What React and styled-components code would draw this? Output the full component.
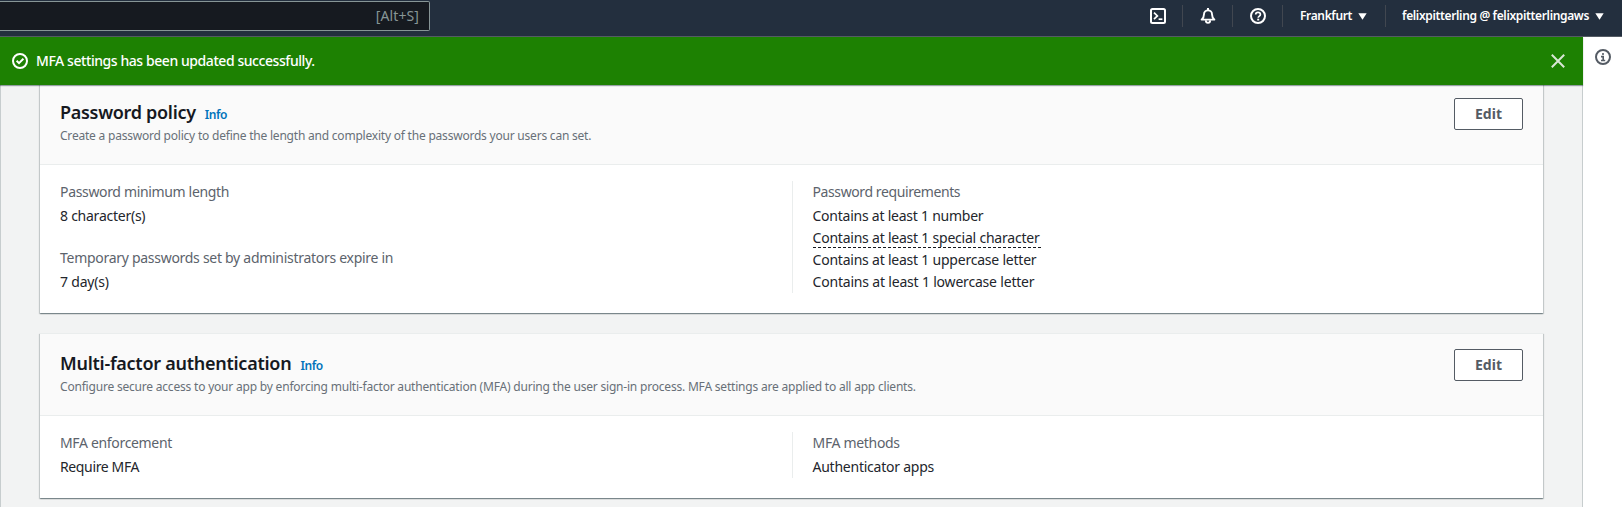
import React from "react";
import styled, { createGlobalStyle } from "styled-components";

const GlobalStyle = createGlobalStyle`
  *, *::before, *::after { box-sizing: border-box; }
  body {
    margin: 0;
    overflow: hidden;
    font-family: "Noto Sans", "Open Sans", sans-serif;
    font-size: 14px;
    line-height: 22px;
    color: #16191f;
    background: #fff;
  }
`;

const Shell = styled.div`
  display: flex;
  flex-direction: column;
  height: 507px;
  overflow: hidden;
`;

const NavBar = styled.header`
  flex: none;
  display: flex;
  align-items: flex-start;
  justify-content: space-between;
  height: 37px;
  background: #232f3e;
  border-bottom: 1px solid #545b64;
`;

const SearchBox = styled.div`
  display: flex;
  align-items: center;
  justify-content: flex-end;
  width: 430px;
  height: 30px;
  margin-top: 1px;
  padding: 0 10px 0 0;
  background: #161a20;
  border: 1px solid #879596;
  border-left: 0;
  border-radius: 0 2px 2px 0;
  color: #879596;
`;

const NavItems = styled.div`
  display: flex;
  align-items: center;
  height: 22px;
  margin-top: 5px;
`;

const NavItem = styled.div`
  display: flex;
  align-items: center;
  gap: 6px;
  height: 22px;
  padding: 0 ${(p) => p.$right ?? 16}px 0 ${(p) => p.$left ?? 17}px;
  border-right: ${(p) => (p.$last ? "0" : "1px solid #414750")};
  color: #fff;
  font-size: 12px;
  font-weight: 600;
  white-space: nowrap;
`;

const Label = styled.span`
  letter-spacing: ${(p) => p.$track ?? 0}px;
  white-space: nowrap;
`;

const Workspace = styled.div`
  flex: 1;
  display: flex;
  min-height: 0;
`;

const Content = styled.div`
  display: flex;
  flex-direction: column;
  width: 1583px;
`;

const Flash = styled.div`
  position: relative;
  z-index: 1;
  flex: none;
  display: flex;
  align-items: center;
  height: 48px;
  padding: 0 17px 0 12px;
  background: #1d8102;
  box-shadow: 0 1px 1px rgba(0, 28, 36, 0.4);
  color: #fff;
  font-weight: 500;
`;

const FlashText = styled.span`
  flex: 1;
  margin-left: 8px;
  letter-spacing: -0.43px;
`;

const Main = styled.main`
  flex: 1;
  display: flex;
  flex-direction: column;
  gap: 20px;
  min-height: 0;
  padding: 0 39px;
  background: #f2f3f3;
  border: solid #c7cdce;
  border-width: 0 1px;
`;

const Card = styled.section`
  flex: none;
  background: #fff;
  border-top: 1px solid #eaeded;
  box-shadow: 0 1px 1px 0 rgba(0, 28, 36, 0.3), 1px 1px 1px 0 rgba(0, 28, 36, 0.15),
    -1px 1px 1px 0 rgba(0, 28, 36, 0.15);

  &:first-child { margin-top: -3px; }
`;

const CardHeader = styled.div`
  display: flex;
  align-items: flex-start;
  justify-content: space-between;
  height: 82px;
  padding: 15px 20px 0;
  background: #fafafa;
  border-bottom: 1px solid #eaeded;
`;

const TitleRow = styled.div`
  display: flex;
  align-items: baseline;
  gap: 9px;
  height: 22px;
  margin-top: 3px;
`;

const Title = styled.h2`
  margin: 0;
  font-size: 18px;
  line-height: 22px;
  font-weight: 600;
  letter-spacing: ${(p) => p.$track}px;
`;

const InfoLink = styled.a`
  font-size: 12px;
  font-weight: 600;
  letter-spacing: -0.4px;
  color: #0073bb;
`;

const Description = styled.p`
  margin: 4px 0 0;
  font-size: 12px;
  line-height: 18px;
  letter-spacing: ${(p) => p.$track}px;
  color: #687078;
`;

const EditButton = styled.button`
  width: 69px;
  height: 32px;
  padding: 0;
  font: 700 14px/20px "Noto Sans", sans-serif;
  color: #545b64;
  background: #fff;
  border: 1px solid #545b64;
  border-radius: 2px;
`;

const CardBody = styled.div`
  display: grid;
  grid-template-columns: 752px 1fr;
  padding: 16px 0 20px;
`;

const Column = styled.div`
  display: flex;
  flex-direction: column;
  gap: 20px;
  padding: 0 20px;

  & + & {
    padding-left: 19.5px;
    border-left: 1px solid #eaeded;
  }
`;

const FieldName = styled.div`
  margin-bottom: 2px;
  color: #5c636c;
  letter-spacing: ${(p) => p.$track}px;
`;

const FieldValue = styled.div`
  color: #23262c;
  letter-spacing: ${(p) => p.$track}px;
`;

const Marked = styled.span`
  display: block;
  width: 228px;
  height: 22px;
  background: repeating-linear-gradient(90deg, #16191f 0 3px, transparent 3px 5px) 0 20px / 100% 1px no-repeat;
`;

const ToolsRail = styled.aside`
  flex: 1;
  display: flex;
  justify-content: center;
  align-items: flex-start;
  padding-top: 12px;
  background: #fff;
`;

const Icon = styled.svg`
  display: block;
  flex: none;
  fill: none;
  stroke: currentColor;
  stroke-width: ${(p) => p.$stroke ?? 2};
  color: ${(p) => p.$color ?? "#fff"};
`;

const Caret = () => (
  <Icon width="9" height="7" viewBox="0 0 9 7">
    <path d="M0.3 0.3h8.4L4.5 6.8z" fill="currentColor" stroke="none" />
  </Icon>
);

const TerminalIcon = () => (
  <Icon width="16" height="16" viewBox="0 0 16 16">
    <rect x="1" y="1" width="14" height="14" rx="1.5" />
    <path d="M4 4.6 7.4 7.9 4 11.2" strokeWidth="1.7" />
    <path d="M8.6 11.2h3.8" strokeWidth="1.7" />
  </Icon>
);

const BellIcon = () => (
  <Icon width="16" height="16" viewBox="0 0 16 16">
    <path d="M1.6 11.6C3.2 10.2 4 9 4 6.2 4 3.8 5.8 2.4 8 2.4s4 1.4 4 3.8c0 2.8.8 4 2.4 5.4z" strokeWidth="1.9" strokeLinejoin="round" />
    <path d="M8 0v2.4" />
    <path d="M5.9 12.2v.6a2.1 2.1 0 0 0 4.2 0v-.6" strokeWidth="1.9" />
  </Icon>
);

const HelpIcon = () => (
  <Icon width="16" height="16" viewBox="0 0 16 16">
    <circle cx="8" cy="8" r="7" />
    <path d="M5.7 6.5C5.7 5 6.7 4.3 8 4.3s2.4.8 2.4 2.1c0 1.6-2.2 1.7-2.2 3.4" strokeWidth="1.7" />
    <path d="M8.2 10.7v1.8" />
  </Icon>
);

const SuccessIcon = () => (
  <Icon width="16" height="16" viewBox="0 0 16 16">
    <circle cx="8" cy="8" r="7" />
    <path d="M4.6 7.8 7 10.1l4.4-4.3" />
  </Icon>
);

const CloseIcon = () => (
  <Icon width="16" height="16" viewBox="0 0 16 16" $color="#d9e6d5">
    <path d="M1.8 1.8 14.2 14.2M14.2 1.8 1.8 14.2" />
  </Icon>
);

const InfoIcon = () => (
  <Icon width="16" height="16" viewBox="0 0 16 16" $color="#545b64">
    <circle cx="8" cy="8" r="7" />
    <path d="M8 4v2M6 7.6h2.2V11M6 11.5h4.2" strokeWidth="1.6" />
  </Icon>
);

const cards = [
  {
    title: "Password policy",
    titleTrack: -0.3,
    description: "Create a password policy to define the length and complexity of the passwords your users can set.",
    descriptionTrack: -0.212,
    columns: [
      [
        { name: "Password minimum length", track: -0.34, values: [{ text: "8 character(s)", track: -0.25 }] },
        {
          name: "Temporary passwords set by administrators expire in",
          track: -0.285,
          values: [{ text: "7 day(s)", track: -0.2 }],
        },
      ],
      [
        {
          name: "Password requirements",
          track: -0.4,
          values: [
            { text: "Contains at least 1 number", track: -0.24 },
            { text: "Contains at least 1 special character", track: -0.22, marked: true },
            { text: "Contains at least 1 uppercase letter", track: -0.22 },
            { text: "Contains at least 1 lowercase letter", track: -0.19 },
          ],
        },
      ],
    ],
  },
  {
    title: "Multi-factor authentication",
    titleTrack: -0.26,
    description:
      "Configure secure access to your app by enforcing multi-factor authentication (MFA) during the user sign-in process. MFA settings are applied to all app clients.",
    descriptionTrack: -0.2,
    columns: [
      [{ name: "MFA enforcement", track: -0.33, values: [{ text: "Require MFA", track: -0.37 }] }],
      [{ name: "MFA methods", track: -0.32, values: [{ text: "Authenticator apps", track: -0.24 }] }],
    ],
  },
];

const SettingsCard = ({ card }) => (
  <Card>
    <CardHeader>
      <div>
        <TitleRow>
          <Title $track={card.titleTrack}>{card.title}</Title>
          <InfoLink>Info</InfoLink>
        </TitleRow>
        <Description $track={card.descriptionTrack}>{card.description}</Description>
      </div>
      <EditButton>Edit</EditButton>
    </CardHeader>
    <CardBody>
      {card.columns.map((fields, i) => (
        <Column key={i}>
          {fields.map((field) => (
            <div key={field.name}>
              <FieldName $track={field.track}>{field.name}</FieldName>
              {field.values.map((v) => (
                <FieldValue key={v.text} $track={v.track}>
                  {v.marked ? <Marked>{v.text}</Marked> : v.text}
                </FieldValue>
              ))}
            </div>
          ))}
        </Column>
      ))}
    </CardBody>
  </Card>
);

export default function App() {
  return (
    <Shell>
      <GlobalStyle />
      <NavBar>
        <SearchBox>
          <Label $track={0.1}>[Alt+S]</Label>
        </SearchBox>
        <NavItems>
          <NavItem><TerminalIcon /></NavItem>
          <NavItem><BellIcon /></NavItem>
          <NavItem><HelpIcon /></NavItem>
          <NavItem $right={18}>
            <Label $track={-0.37}>Frankfurt</Label>
            <Caret />
          </NavItem>
          <NavItem $last $left={16} $right={18}>
            <Label $track={-0.35}>felixpitterling @ felixpitterlingaws</Label>
            <Caret />
          </NavItem>
        </NavItems>
      </NavBar>
      <Workspace>
        <Content>
          <Flash>
            <SuccessIcon />
            <FlashText>MFA settings has been updated successfully.</FlashText>
            <CloseIcon />
          </Flash>
          <Main>
            {cards.map((card) => <SettingsCard key={card.title} card={card} />)}
          </Main>
        </Content>
        <ToolsRail>
          <InfoIcon />
        </ToolsRail>
      </Workspace>
    </Shell>
  );
}
